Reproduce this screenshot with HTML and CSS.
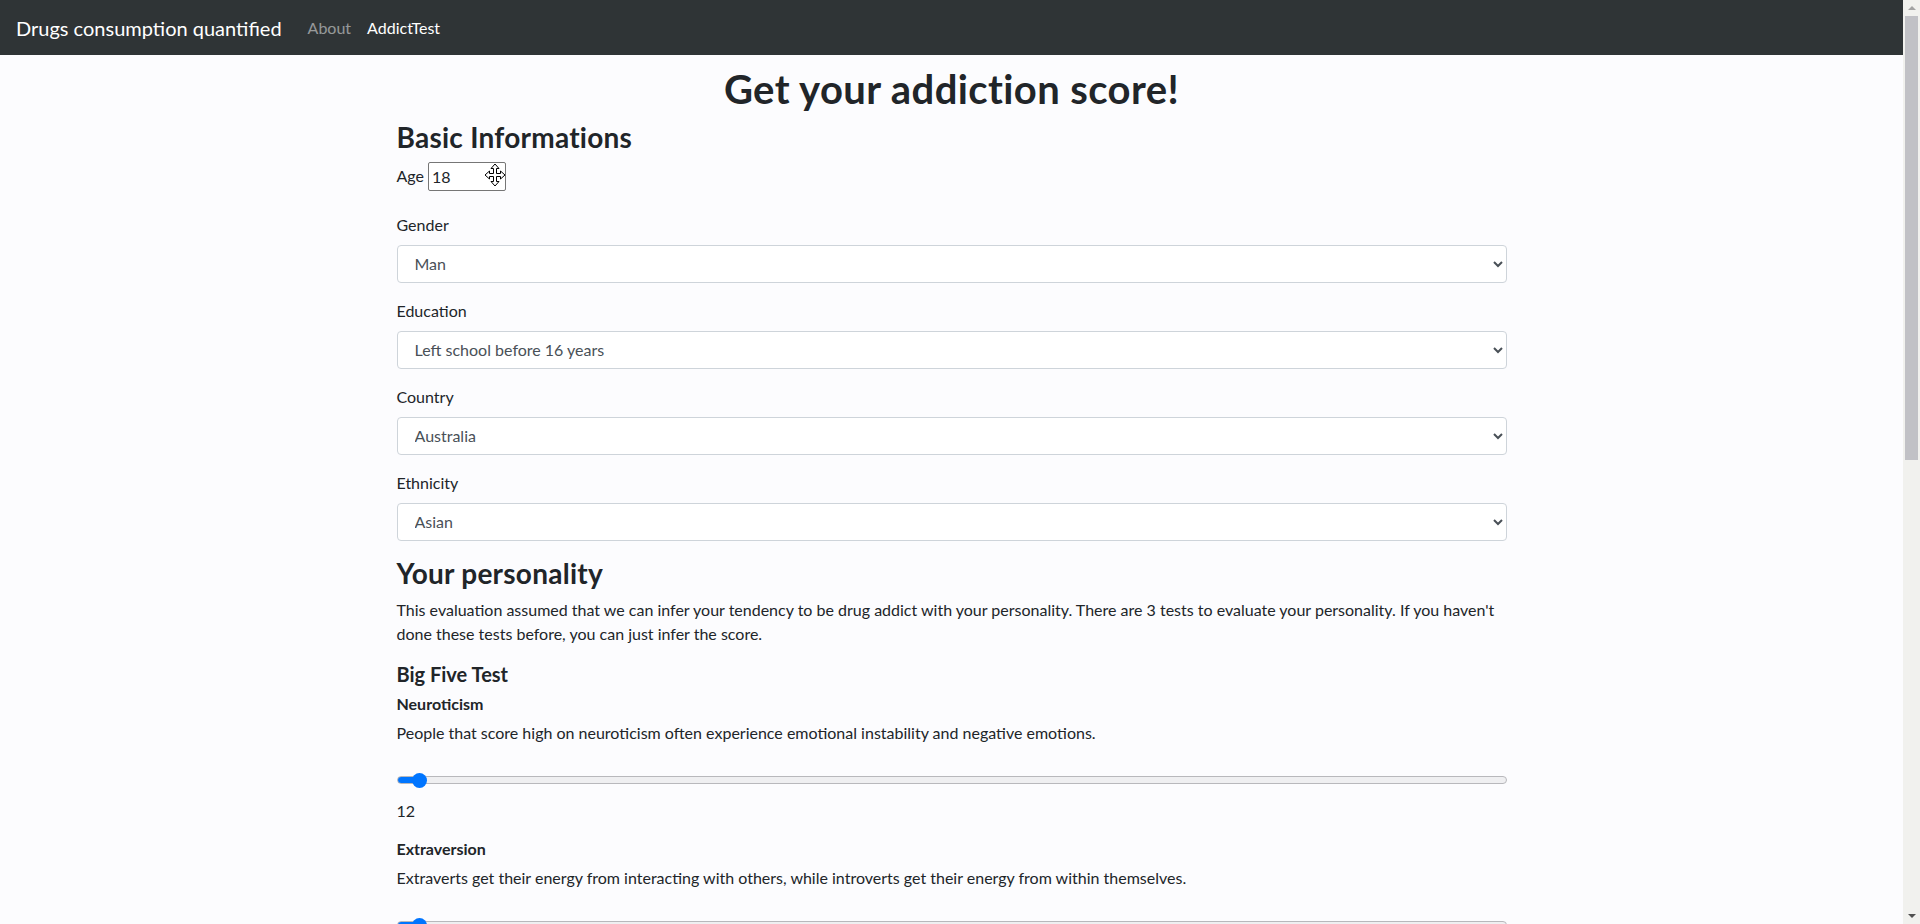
FILE: index.html
```html
<!DOCTYPE html>
<html lang="en">
<head>
<meta charset="utf-8">
<title>Drugs consumption quantified</title>
<link rel="stylesheet" href="styles.css">
</head>
<body>
<div class="page">
  <nav class="navbar">
    <a class="brand" href="#">Drugs consumption quantified</a>
    <ul class="nav">
      <li><a class="nav-link" href="#">About</a></li>
      <li><a class="nav-link active" href="#">AddictTest</a></li>
    </ul>
  </nav>
  <main class="container">
    <h1 class="title">Get your addiction score!</h1>
    <h2 class="section">Basic Informations</h2>
    <div class="age-row">
      <label class="age-label" for="age">Age</label>
      <span class="age-wrap">
        <input id="age" class="age-input" type="number" value="18">
        <svg class="cursor" width="22" height="24" viewBox="0 0 22 24" aria-hidden="true">
          <path d="M11 1 L15 5.5 L12.5 5.5 L12.5 10.5 L16.5 10.5 L16.5 8 L21 12 L16.5 16 L16.5 13.5 L12.5 13.5 L12.5 18.5 L15 18.5 L11 23 L7 18.5 L9.5 18.5 L9.5 13.5 L5.5 13.5 L5.5 16 L1 12 L5.5 8 L5.5 10.5 L9.5 10.5 L9.5 5.5 L7 5.5 Z" fill="#fff" stroke="#000" stroke-width="1" stroke-linejoin="miter"/>
        </svg>
      </span>
    </div>
    <div class="form-group">
      <label class="field-label">Gender</label>
      <select class="form-select"><option>Man</option><option>Woman</option></select>
    </div>
    <div class="form-group">
      <label class="field-label">Education</label>
      <select class="form-select"><option>Left school before 16 years</option></select>
    </div>
    <div class="form-group">
      <label class="field-label">Country</label>
      <select class="form-select"><option>Australia</option></select>
    </div>
    <div class="form-group">
      <label class="field-label">Ethnicity</label>
      <select class="form-select"><option>Asian</option></select>
    </div>

    <h2 class="section personality">Your personality</h2>
    <p class="intro">This evaluation assumed that we can infer your tendency to be drug addict with your personality. There are 3 tests to evaluate your personality. If you haven't done these tests before, you can just infer the score.</p>

    <h5 class="test-title">Big Five Test</h5>
    <div class="trait">
      <label class="trait-name">Neuroticism</label>
      <p class="trait-desc">People that score high on neuroticism often experience emotional instability and negative emotions.</p>
      <input class="range" type="range" min="12" max="60" value="12">
      <p class="trait-value">12</p>
    </div>
    <div class="trait">
      <label class="trait-name">Extraversion</label>
      <p class="trait-desc">Extraverts get their energy from interacting with others, while introverts get their energy from within themselves.</p>
      <input class="range" type="range" min="16" max="59" value="16">
      <p class="trait-value">16</p>
    </div>
    <div class="trait">
      <label class="trait-name">Openness to experience</label>
      <p class="trait-desc">Openness involves being curious, imaginative and willing to try new things.</p>
      <input class="range" type="range" min="24" max="60" value="24">
      <p class="trait-value">24</p>
    </div>
  </main>
</div>
<div class="scrollbar" aria-hidden="true">
  <div class="sb-btn"><span class="sb-arrow up"></span></div>
  <div class="sb-thumb"></div>
  <div class="sb-space"></div>
  <div class="sb-btn"><span class="sb-arrow down"></span></div>
</div>
</body>
</html>
```
FILE: styles.css
```css
* { box-sizing: border-box; }

html, body {
  margin: 0;
  padding: 0;
}

body {
  display: flex;
  height: 100vh;
  overflow: hidden;
  font-family: "Lato", "Liberation Sans", sans-serif;
  font-size: 16px;
  line-height: 1.5;
  color: #212529;
  background: #fcfcfe;
}

.page {
  flex: 1;
  min-width: 0;
  overflow: hidden;
}

/* fake browser scrollbar */
.scrollbar {
  flex: none;
  width: 17px;
  display: flex;
  flex-direction: column;
  background: #f1f1ee;
}

.sb-btn {
  height: 16px;
  display: flex;
  align-items: center;
  justify-content: center;
}

.sb-arrow {
  width: 0;
  height: 0;
  border-left: 4px solid transparent;
  border-right: 4px solid transparent;
}

.sb-arrow.up { border-bottom: 4px solid #a3a3a3; }
.sb-arrow.down { border-top: 4px solid #505050; }

.sb-thumb {
  height: 444px;
  margin: 0 2px;
  background: #c1c1c6;
}

.sb-space { flex: 1; }

/* navbar */
.navbar {
  display: flex;
  align-items: center;
  height: 55px;
  padding: 0 16px;
  background: #2f3436;
}

.brand {
  font-size: 20px;
  color: #fff;
  text-decoration: none;
  margin-right: 18px;
}

.nav {
  display: flex;
  list-style: none;
  margin: 0;
  padding: 0;
}

.nav-link {
  display: block;
  padding: 8px 8px;
  font-size: 16px;
  color: rgba(255, 255, 255, 0.5);
  text-decoration: none;
}

.nav-link.active { color: #fff; }

/* content */
.container {
  max-width: 1140px;
  margin: 0 auto;
  padding: 0 15px;
}

.title {
  text-align: center;
  font-size: 40px;
  font-weight: 700;
  line-height: 1.2;
  letter-spacing: 0.4px;
  margin: 10px 0 0;
}

.section {
  font-size: 28px;
  font-weight: 700;
  line-height: 1.2;
  letter-spacing: 0.25px;
  margin: 8px 0 0;
}

.age-row {
  display: flex;
  align-items: center;
  gap: 4px;
  margin-top: 7px;
  margin-bottom: 22px;
}

.age-wrap {
  position: relative;
  display: block;
}

.age-input {
  display: block;
  width: 78px;
  height: 29px;
  font: inherit;
  font-size: 16px;
  padding: 1px 3px;
  border: 1px solid #767676;
  border-radius: 2px;
  background: #fff;
  color: #212529;
}

.age-input::-webkit-inner-spin-button,
.age-input::-webkit-outer-spin-button {
  -webkit-appearance: none;
  margin: 0;
}

.cursor {
  position: absolute;
  left: 56px;
  top: 1px;
}

.form-group { margin-bottom: 16px; }

.field-label {
  display: block;
  margin-bottom: 8px;
}

.form-select {
  display: block;
  width: 100%;
  height: 38px;
  padding: 6px 12px 6px 13px;
  font: inherit;
  font-size: 16px;
  color: #495057;
  background: #fff;
  border: 1px solid #ced4da;
  border-radius: 4px;
}

.personality { margin-top: 16px; }

.intro { margin: 8px 0 16px; }

.test-title {
  font-size: 20px;
  font-weight: 700;
  line-height: 1.2;
  margin: 0 0 6px;
}

.trait-name {
  display: block;
  font-weight: 700;
  font-size: 16px;
  margin-bottom: 5px;
}

.trait-desc { margin: 0; }

.range {
  -webkit-appearance: none;
  appearance: none;
  display: block;
  width: 100%;
  height: 16px;
  margin: 27px 0 11px;
  padding: 0;
  background: transparent;
}

.range::-webkit-slider-runnable-track {
  height: 8px;
  border: 1px solid #b8b8bc;
  border-radius: 4px;
  background: linear-gradient(to right, #0075ff 0, #0075ff 22px, #efeff1 22px);
}

.range::-webkit-slider-thumb {
  -webkit-appearance: none;
  appearance: none;
  width: 15px;
  height: 15px;
  margin-top: -4.5px;
  border: none;
  border-radius: 50%;
  background: #0075ff;
  transform: translateX(14px);
}

.trait-value { margin: 0 0 14px; }
```
